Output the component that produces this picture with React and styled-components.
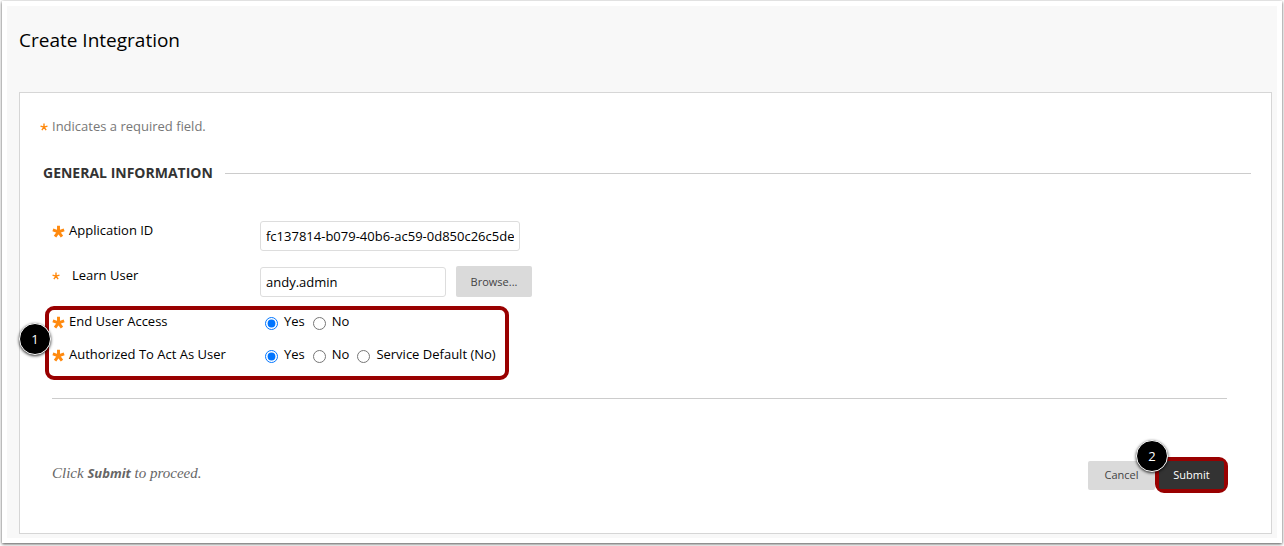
import React, { useState } from "react";
import styled, { createGlobalStyle } from "styled-components";

const accessOptions = ["Yes", "No"];
const actAsOptions = ["Yes", "No", "Service Default (No)"];

const RequiredIcon = ({ small }) => (
  <StarSvg viewBox="0 0 12 12" $small={small} aria-hidden="true">
    <path
      d="M6 6.3V0.8M6 6.3L0.8 4.6M6 6.3L11.2 4.6M6 6.3L2.8 10.8M6 6.3L9.2 10.8"
      stroke="#ff8a0f"
      strokeWidth={small ? 2.1 : 2.7}
    />
  </StarSvg>
);

const RadioGroup = ({ name, options, value, onChange }) => (
  <Options>
    {options.map((option) => (
      <Option key={option}>
        <input
          type="radio"
          name={name}
          value={option}
          checked={value === option}
          onChange={() => onChange(option)}
        />
        {option}
      </Option>
    ))}
  </Options>
);

const App = () => {
  const [appId, setAppId] = useState("fc137814-b079-40b6-ac59-0d850c26c5de");
  const [learnUser, setLearnUser] = useState("andy.admin");
  const [access, setAccess] = useState("Yes");
  const [actAs, setActAs] = useState("Yes");

  return (
    <>
      <GlobalStyle />
      <Frame>
        <Page>
          <Header>
            <h1>Create Integration</h1>
          </Header>
          <Panel onSubmit={(e) => e.preventDefault()}>
            <RequiredNote>
              <RequiredIcon small />
              Indicates a required field.
            </RequiredNote>
            <SectionTitle>General Information</SectionTitle>
            <Fields>
              <Row>
                <FieldLabel htmlFor="app-id">
                  <RequiredIcon />
                  Application ID
                </FieldLabel>
                <TextInput
                  id="app-id"
                  $width={260}
                  value={appId}
                  onChange={(e) => setAppId(e.target.value)}
                />
              </Row>
              <Row>
                <FieldLabel htmlFor="learn-user" $wide>
                  <RequiredIcon small />
                  Learn User
                </FieldLabel>
                <InputGroup>
                  <TextInput
                    id="learn-user"
                    $width={186}
                    value={learnUser}
                    onChange={(e) => setLearnUser(e.target.value)}
                  />
                  <BrowseButton type="button">Browse...</BrowseButton>
                </InputGroup>
              </Row>
              <Highlight>
                <Row role="radiogroup" aria-labelledby="access-label">
                  <FieldLabel as="span" id="access-label">
                    <RequiredIcon />
                    End User Access
                  </FieldLabel>
                  <RadioGroup
                    name="access"
                    options={accessOptions}
                    value={access}
                    onChange={setAccess}
                  />
                </Row>
                <Row role="radiogroup" aria-labelledby="act-as-label">
                  <FieldLabel as="span" id="act-as-label">
                    <RequiredIcon />
                    Authorized To Act As User
                  </FieldLabel>
                  <RadioGroup
                    name="act-as"
                    options={actAsOptions}
                    value={actAs}
                    onChange={setActAs}
                  />
                </Row>
                <StepBadge $top={13} $left={-30}>1</StepBadge>
              </Highlight>
            </Fields>
            <Footer>
              <Hint>
                Click <strong>Submit</strong> to proceed.
              </Hint>
              <Actions>
                <CancelButton type="button">Cancel</CancelButton>
                <SubmitOutline>
                  <SubmitButton type="submit">Submit</SubmitButton>
                  <StepBadge $top={-21} $left={-23}>2</StepBadge>
                </SubmitOutline>
              </Actions>
            </Footer>
          </Panel>
        </Page>
      </Frame>
    </>
  );
};

export default App;

// Styled Components
const GlobalStyle = createGlobalStyle`
  * {
    box-sizing: border-box;
  }

  body {
    display: flow-root;
    margin: 0;
    background-color: #fff;
    color: #000;
    font-family: "Open Sans", "Noto Sans", sans-serif;
    font-size: 13px;
    line-height: 18px;
  }
`;

const Frame = styled.div`
  margin: 1px 2px 3px;
  padding: 5px;
  background-color: #fff;
  box-shadow: 0 1px 3px rgba(0, 0, 0, 0.7);
`;

const Page = styled.main`
  padding: 0 5px 4px 12px;
  background-color: #f8f8f8;
`;

const Header = styled.header`
  padding: 20px 0 38px;

  h1 {
    margin: 0;
    font-size: 19px;
    font-weight: 400;
    line-height: 28px;
  }
`;

const Panel = styled.form`
  padding: 23px 20px 40px;
  background-color: #fff;
  border: 1px solid #d6d6d6;
`;

const RequiredNote = styled.p`
  display: flex;
  align-items: center;
  gap: 4px;
  margin: 0 0 27px;
  color: #777;
  line-height: 20px;
`;

const SectionTitle = styled.h2`
  display: flex;
  align-items: center;
  gap: 12px;
  margin: 0 0 38px;
  padding-left: 3px;
  color: #333;
  font-size: 14px;
  font-weight: 700;
  line-height: 20px;
  text-transform: uppercase;

  &::after {
    content: "";
    flex: 1;
    border-top: 1px solid #ccc;
  }
`;

const Fields = styled.div`
  display: flex;
  flex-direction: column;
  gap: 15px;
  margin: 0 24px 0 12px;
  padding-bottom: 18px;
  border-bottom: 1px solid #ccc;
`;

const Row = styled.div`
  display: flex;
  align-items: flex-start;
`;

const FieldLabel = styled.label`
  display: flex;
  align-items: center;
  gap: ${({ $wide }) => ($wide ? "12px" : "4px")};
  width: 208px;
`;

const StarSvg = styled.svg`
  flex: none;
  width: ${({ $small }) => ($small ? 8 : 13)}px;
  height: ${({ $small }) => ($small ? 8 : 13)}px;
  margin-top: 2px;
  fill: none;
`;

const InputGroup = styled.div`
  display: flex;
  align-items: center;
  gap: 10px;
`;

const TextInput = styled.input`
  width: ${({ $width }) => $width}px;
  height: 30px;
  padding: 0 5px;
  border: 1px solid #ddd;
  border-radius: 3px;
  background-color: #fff;
  color: #000;
  font: inherit;
`;

const Button = styled.button`
  border: none;
  border-radius: 2px;
  background-color: #dadada;
  color: #444;
  font-family: inherit;
  font-size: 11px;
  cursor: pointer;
`;

const BrowseButton = styled(Button)`
  width: 76px;
  height: 31px;
`;

const CancelButton = styled(Button)`
  width: 67px;
  height: 29px;
  padding-bottom: 3px;
`;

const SubmitButton = styled(Button)`
  width: 65px;
  height: 28px;
  padding-bottom: 3px;
  background-color: #333;
  color: #fff;
`;

/* Red outline that groups the options of step 1 */
const Highlight = styled.div`
  position: relative;
  display: flex;
  flex-direction: column;
  gap: 15px;
  width: fit-content;
  margin: -6px 0 0 -7px;
  padding: 2px 9px 13px 3px;
  border: 4px solid #990000;
  border-radius: 9px;
`;

const Options = styled.div`
  display: flex;
  gap: 8px;
  padding-left: 5px;
`;

const Option = styled.label`
  display: flex;
  align-items: flex-start;
  gap: 6px;

  input {
    width: 13px;
    height: 13px;
    margin: 5px 0 0;
    accent-color: #0075ff;
  }
`;

const StepBadge = styled.span`
  position: absolute;
  top: ${({ $top }) => $top}px;
  left: ${({ $left }) => $left}px;
  display: flex;
  align-items: center;
  justify-content: center;
  width: 32px;
  height: 32px;
  border: 1px solid #fff;
  border-radius: 50%;
  background-color: #000;
  box-shadow: 0 1px 3px rgba(0, 0, 0, 0.8);
  color: #fff;
`;

const Footer = styled.footer`
  display: flex;
  align-items: flex-start;
  justify-content: space-between;
  margin: 58px 23px 0 12px;
`;

const Hint = styled.p`
  margin: 0;
  padding-top: 7px;
  color: #666;
  font-family: Georgia, "Liberation Serif", serif;
  font-size: 15px;
  font-style: italic;

  strong {
    font-family: "Open Sans", "Noto Sans", sans-serif;
    font-size: 13px;
  }
`;

const Actions = styled.div`
  display: flex;
  align-items: center;
`;

const SubmitOutline = styled.div`
  position: relative;
  display: flex;
  border: 4px solid #990000;
  border-radius: 9px;
`;
